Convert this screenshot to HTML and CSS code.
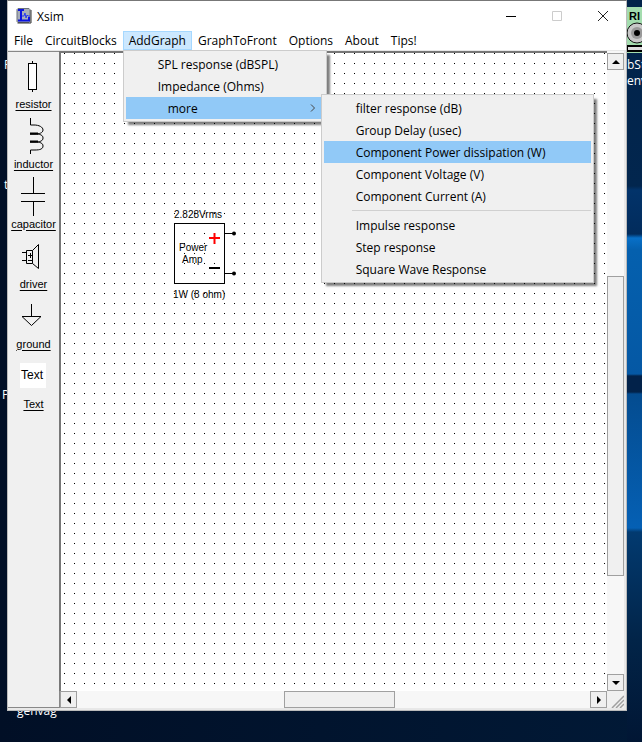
FILE: index.html
```
<!doctype html>
<html lang="en">
<head>
<title>Xsim</title>
<meta charset="UTF-8">
<meta name="viewport" content="width=device-width, initial-scale=1.0">
<link rel="stylesheet" href="styles.css">
</head>
<body>

  <!-- desktop icons, mostly hidden behind the window -->
  <div class="desktop-label first">P</div>
  <div class="desktop-label second">t</div>
  <div class="desktop-label third">P</div>
  <div class="desktop-label fourth">genvag</div>
  <div class="shortcut">
    <svg width="15" height="46" viewBox="0 0 15 46">
      <rect width="15" height="46" fill="#a3dcae"/>
      <circle cx="10" cy="26" r="10" fill="#c8c8c8" stroke="#111"/>
      <circle cx="10" cy="26" r="6" fill="#999"/>
      <circle cx="10" cy="26" r="3" fill="#000"/>
      <rect x="0" y="39" width="16" height="5" fill="#ddd" stroke="#000" stroke-width="2"/>
      <text x="2" y="13">RI</text>
    </svg>
    <div>bSt</div>
    <div>env</div>
  </div>

  <main class="window">

    <header class="titlebar">
      <svg class="logo" width="16" height="16" viewBox="0 0 16 16">
        <path d="M2 0.500h11l1 1v12l-1 1H2l-1-1v-12z" fill="#a8aeb8" stroke="#6a707a"/>
        <path d="M1.500 15h13.500V2" fill="none" stroke="#333"/>
        <path d="M2 2h6M5 2v10M2 12.500h11V9" fill="none" stroke="#0a12e0" stroke-width="2"/>
        <path d="M6 8h2l1-3 1 5 1-3 1 1h2" fill="none" stroke="#2a3bf0"/>
      </svg>
      <h1>Xsim</h1>
      <div class="window-buttons">
        <button aria-label="Minimize"><svg width="12" height="12"><path d="M1 6.500h10" stroke="#000"/></svg></button>
        <button aria-label="Maximize" disabled><svg width="12" height="12"><path d="M1.500 1.500h9v9h-9z" stroke="#ccc" fill="none"/></svg></button>
        <button aria-label="Close"><svg width="12" height="12"><path d="M1 1l10 10M11 1L1 11" stroke="#222"/></svg></button>
      </div>
    </header>

    <nav class="menubar">
      <button>File</button>
      <button>CircuitBlocks</button>
      <div class="menu-open">
        <button class="active">AddGraph</button>
        <div class="menu addgraph">
          <button>SPL response (dBSPL)</button>
          <button>Impedance (Ohms)</button>
          <div class="menu-open">
            <button class="selected more">more
              <svg width="6" height="8"><path d="M1 0.500l3.500 3.500L1 7.500" stroke="#444" fill="none"/></svg>
            </button>
            <div class="menu submenu">
              <button>filter response (dB)</button>
              <button>Group Delay (usec)</button>
              <button class="selected">Component Power dissipation (W)</button>
              <button>Component Voltage (V)</button>
              <button>Component Current (A)</button>
              <hr>
              <button>Impulse response</button>
              <button>Step response</button>
              <button>Square Wave Response</button>
            </div>
          </div>
        </div>
      </div>
      <button>GraphToFront</button>
      <button>Options</button>
      <button>About</button>
      <button>Tips!</button>
    </nav>

    <div class="workspace">

      <aside class="parts">
        <button>
          <svg width="50" height="42" viewBox="0 0 50 42">
            <path d="M24.500 7v31" stroke="#000"/>
            <rect x="20.500" y="9.500" width="8" height="26" fill="#fff" stroke="#000"/>
          </svg>
          <span>resistor</span>
        </button>
        <button>
          <svg width="50" height="42" viewBox="0 0 50 42">
            <path d="M22.500 4v7H26c5 0 9 2 9 5s-4 4-8 4h-5 5c5 0 8 1 8 4s-3 4-8 4h-5 5c5 0 8 1 8 4s-3 4-8 4h-4.500v4" fill="none" stroke="#000"/>
            <path d="M22 19.500h8M22 27.500h8" stroke="#000" stroke-width="2"/>
          </svg>
          <span>inductor</span>
        </button>
        <button>
          <svg width="50" height="42" viewBox="0 0 50 42">
            <path d="M25.500 3v16M13 19.500h24M13 27.500h24M25.500 27v15" stroke="#000" fill="none"/>
          </svg>
          <span>capacitor</span>
        </button>
        <button>
          <svg width="50" height="42" viewBox="0 0 50 42">
            <path d="M18.500 16.500h6v13h-6zM24.500 16.500l6-6v24l-6-5M14 18.500h5M14 26.500h5" fill="none" stroke="#000"/>
            <path d="M20 21.500h5M22.500 19v5M20 26.500h5" stroke="#000"/>
          </svg>
          <span>driver</span>
        </button>
        <button>
          <svg width="50" height="42" viewBox="0 0 50 42">
            <path d="M23.500 10v12M14 22.500h19l-9.500 9z" fill="none" stroke="#000"/>
          </svg>
          <span>ground</span>
        </button>
        <button>
          <svg width="50" height="42" viewBox="0 0 50 42">
            <rect x="12" y="9" width="26" height="25" fill="#fff"/>
            <text x="13" y="25">Text</text>
          </svg>
          <span>Text</span>
        </button>
      </aside>

      <div class="canvas">
        <svg class="amp" width="70" height="100" viewBox="0 0 70 100">
          <rect x="4.500" y="20.500" width="50" height="60" fill="none" stroke="#000"/>
          <path d="M55 30.500h8M55 70.500h8" stroke="#000"/>
          <circle cx="64" cy="30.500" r="2"/>
          <circle cx="64" cy="70.500" r="2"/>
          <path d="M39 35h11M44.500 30v11" stroke="#f00" stroke-width="2"/>
          <path d="M39 65h11" stroke="#000" stroke-width="2"/>
          <text x="4" y="15">2.828Vrms</text>
          <text x="9" y="48">Power</text>
          <text x="12" y="60">Amp</text>
          <text x="3" y="95">1W (8 ohm)</text>
        </svg>
      </div>

      <div class="scrollbar vertical">
        <button aria-label="Scroll up"><svg width="8" height="4"><path d="M0 4l4-4 4 4z"/></svg></button>
        <div class="before"></div>
        <div class="thumb"></div>
        <div class="after"></div>
        <button aria-label="Scroll down"><svg width="8" height="4"><path d="M0 0l4 4 4-4z"/></svg></button>
      </div>

      <div class="scrollbar horizontal">
        <button aria-label="Scroll left"><svg width="4" height="8"><path d="M4 0L0 4l4 4z"/></svg></button>
        <div class="before"></div>
        <div class="thumb"></div>
        <div class="after"></div>
        <button aria-label="Scroll right"><svg width="4" height="8"><path d="M0 0l4 4-4 4z"/></svg></button>
      </div>

      <svg class="grip" width="17" height="17"><path d="M5 17L17 5M9 17l8-8M13 17l4-4" stroke="#a0a0a0" stroke-width="1.500"/></svg>

    </div>

  </main>

</body>
</html>
```
FILE: styles.css
```
* {
  box-sizing: border-box;
}

body {
  position: relative;
  margin: 0;
  min-height: 100vh;
  padding: 0 15px 31px 7px;
  background:
    linear-gradient(to bottom, #02234a 0, #02264e 186px, #02336a 190px, #022c5c 234px, #0870c8 238px, #0560ae 250px, #0558a4 374px, #02224a 376px, #02224a 392px, #044c90 394px, #0560b4 528px, #023a70 532px, #022448 640px, #011634 742px) right / 15px 100% no-repeat,
    linear-gradient(to right, #010f26, #011936);
  font-family: "Open Sans", "Noto Sans", sans-serif;
  font-size: 12px;
  color: #000;
}

button {
  margin: 0;
  border: 0;
  padding: 0;
  background: none;
  font: inherit;
  color: inherit;
}

/* desktop */
.desktop-label {
  position: absolute;
  line-height: 16px;
  color: #fff;
}
.first {
  left: 4px;
  top: 57px;
}
.second {
  left: 4px;
  top: 177px;
}
.third {
  left: 2px;
  top: 387px;
}
.fourth {
  left: 17px;
  top: 703px;
}

.shortcut {
  position: absolute;
  top: 7px;
  right: 0;
  width: 15px;
  overflow: hidden;
  line-height: 16px;
  color: #fff;
}
.shortcut svg {
  display: block;
  margin-bottom: 4px;
}
.shortcut text {
  font: bold 11px "Liberation Sans", sans-serif;
}

/* window */
.window {
  position: relative;
  display: flex;
  flex-direction: column;
  min-height: calc(100vh - 31px);
  border: 1px solid #bbb;
  border-top-color: #777;
  background: #fff;
}

.titlebar {
  display: flex;
  align-items: center;
  height: 30px;
  padding-left: 8px;
}
.titlebar h1 {
  flex: 1;
  margin: 0 0 0 5px;
  font-size: 12px;
  font-weight: normal;
}
.window-buttons {
  display: flex;
}
.window-buttons button {
  width: 46px;
  height: 28px;
}
.window-buttons svg {
  display: block;
  margin: auto;
}

/* menus */
.menubar {
  display: flex;
  height: 19px;
}
.menubar > button, .menubar > .menu-open > button {
  height: 19px;
  padding: 0 6px;
}
.menubar .active {
  background: #cce8ff;
  box-shadow: inset 0 0 0 1px #a6d8ff;
}
.menu-open {
  position: relative;
}

.menu {
  position: absolute;
  z-index: 1;
  border: 1px solid #ccc;
  padding: 2px;
  background: #f0f0f0;
  box-shadow: 4px 4px 2px -1px rgba(0, 0, 0, 0.5);
}
.menu button {
  display: block;
  width: 100%;
  height: 22px;
  padding-left: 32px;
  text-align: left;
  white-space: nowrap;
}
.menu .selected {
  background: #91c9f7;
}
.menu hr {
  margin: 3px 0 3px 28px;
  border: 0;
  height: 1px;
  background: #d0d0d0;
}

.addgraph {
  top: 19px;
  left: 0;
  width: 204px;
}
.menu .more {
  display: flex;
  align-items: center;
  justify-content: space-between;
  padding: 0 8px 0 42px;
}
.submenu {
  top: -3px;
  left: calc(100% - 3px);
  width: 273px;
}

/* workspace */
.workspace {
  flex: 1;
  display: grid;
  grid-template-columns: 51px 1fr 17px;
  grid-template-rows: 1fr 17px;
  border: 2px solid #e8e8e8;
  border-width: 1px 2px 2px 0;
}

.parts {
  grid-row: 1 / 3;
  border-top: 1px solid #888;
  border-bottom: 1px solid #888;
  background: #f0f0f0;
  font: 11px "Liberation Sans", sans-serif;
}
.parts button {
  display: block;
  width: 100%;
  height: 60px;
  padding-top: 1px;
}
.parts svg, .parts span {
  display: block;
}
.parts text {
  font-size: 12px;
}
.parts span {
  line-height: 16px;
  text-decoration: underline;
  text-underline-offset: 2px;
}

/* one dot every 10px */
.canvas {
  position: relative;
  border: 2px solid #777;
  border-width: 2px 0 0 2px;
  background:
    linear-gradient(to right, transparent 1px, #fff 1px) 3px 0 / 10px 10px,
    linear-gradient(to bottom, #000 1px, #fff 1px) 3px 0 / 10px 10px;
}
.amp {
  position: absolute;
  left: 109px;
  top: 150px;
}
.amp text {
  font: 10px "Liberation Sans", sans-serif;
}

.scrollbar {
  display: flex;
  background: #f7f7f7;
}
.vertical {
  flex-direction: column;
  padding-top: 2px;
}
.horizontal {
  border-left: 1px solid #888;
}
.scrollbar button {
  flex: 0 0 17px;
  border: 1px solid #a0a0a0;
  background: #f0f0f0;
}
.scrollbar button svg {
  display: block;
  margin: auto;
}
.thumb {
  border: 1px solid #a0a0a0;
  background: #f0f0f0;
}
.vertical .before {
  flex: 207;
}
.vertical .thumb {
  flex: 299;
}
.vertical .after {
  flex: 98;
}
.horizontal .before {
  flex: 208;
}
.horizontal .thumb {
  flex: 109;
}
.horizontal .after {
  flex: 196;
}
.grip {
  background: #f0f0f0;
}
```
